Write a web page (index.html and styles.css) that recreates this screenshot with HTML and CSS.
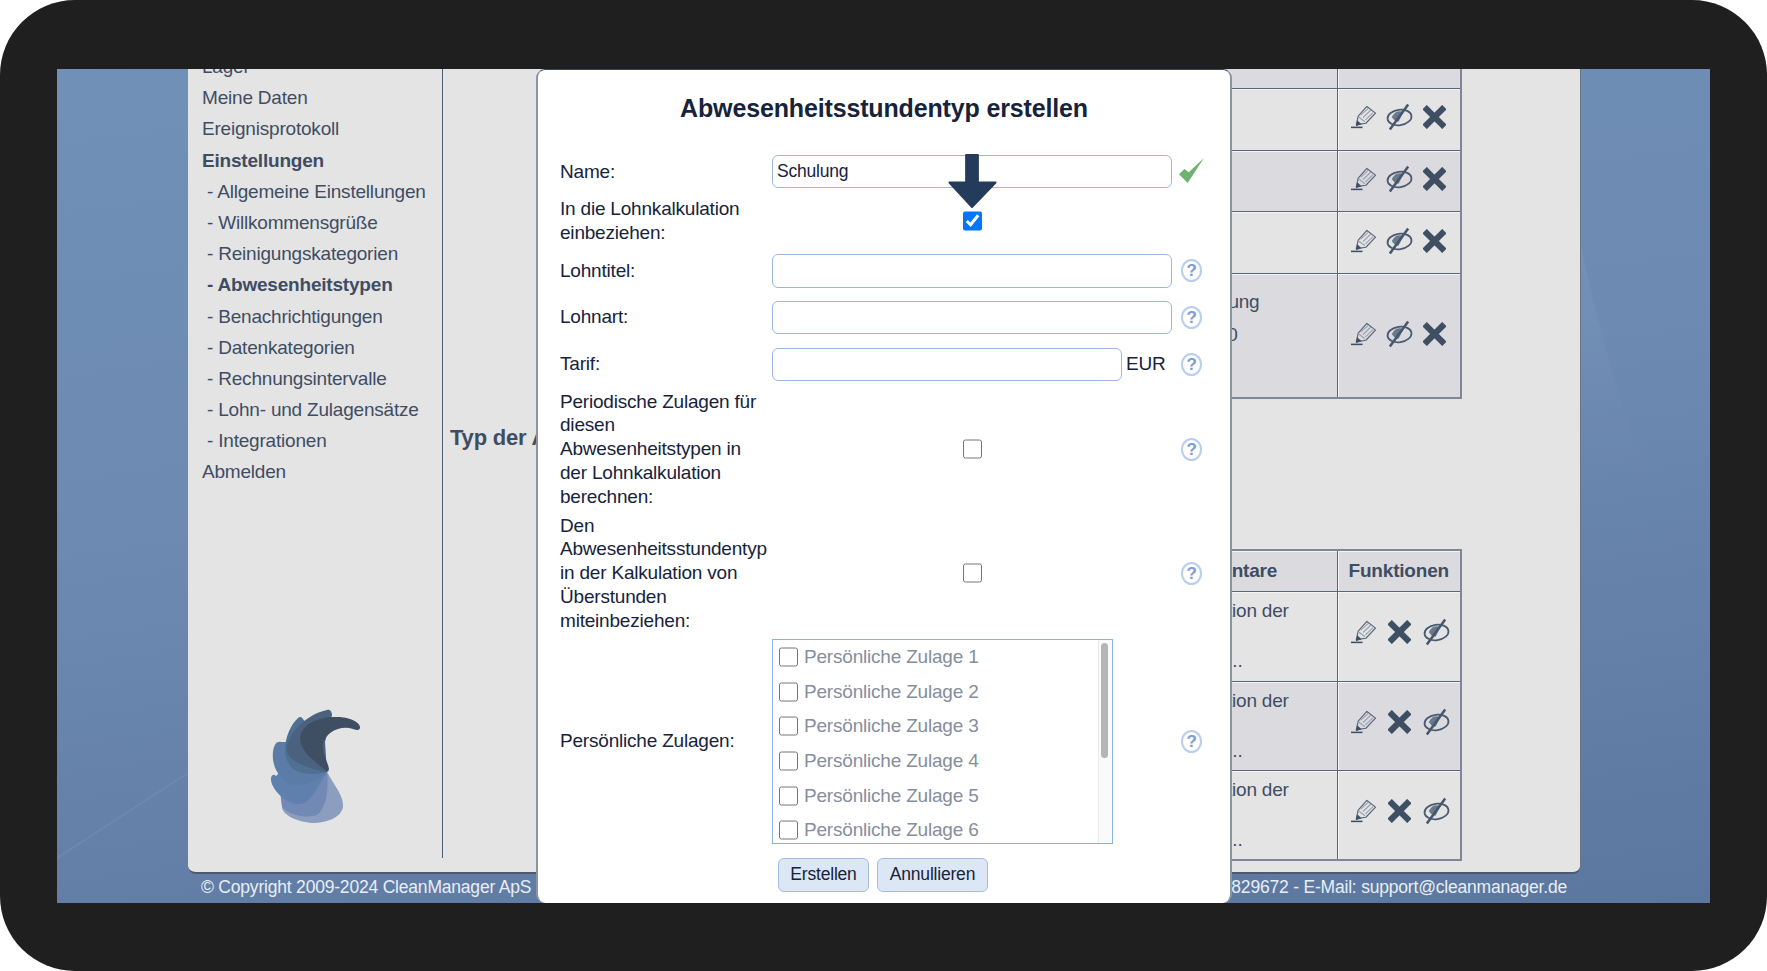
FILE: index.html
```html
<!DOCTYPE html>
<html lang="de">
<head>
    <meta charset="UTF-8">
    <meta name="viewport" content="width=device-width, initial-scale=1.0">
    <title>Abwesenheitstypen</title>
    <link rel="stylesheet" href="styles.css">
</head>
<body>
<svg class="defs" width="0" height="0">
    <symbol id="i-pencil" viewBox="0 0 26 24">
        <path d="M5.5 20 L7.5 11 L16.5 1 L25.5 8 L15.5 18.5 Z" fill="none" stroke="#56657a" stroke-width="1.2" stroke-linejoin="round"/>
        <path d="M10 10 L18 3 M12.5 12.5 L20.5 5 M15 15 L23 7.5 M8 12 L14.5 17" fill="none" stroke="#98a2b0" stroke-width="1.2"/>
        <path d="M5 21.5 L6.5 15.5 L11 19.5 Z" fill="#3f4f63"/>
        <path d="M0 22.8 H12" stroke="#3f4f63" stroke-width="1.6"/>
    </symbol>
    <symbol id="i-eye" viewBox="0 0 28 28">
        <ellipse cx="14" cy="14.5" rx="12.5" ry="8" transform="rotate(-8 14 14.5)" fill="none" stroke="#4a5a6f" stroke-width="1.8"/>
        <path d="M6 14 C9 8 14 7 18 9 L13 19 C10 19 8 17 6 14 Z" fill="#6a788b"/>
        <path d="M4 27 L23 1" stroke="#46566b" stroke-width="2.6"/>
    </symbol>
    <symbol id="i-x" viewBox="0 0 24 24">
        <path d="M4 4 L20 20 M20 4 L4 20" stroke="#3f4f63" stroke-width="6.5" stroke-linecap="square"/>
    </symbol>
</svg>

<div class="frame">
<div class="screen">
    <svg class="wallpaper" viewBox="0 0 1653 834" preserveAspectRatio="none">
        <defs>
            <linearGradient id="swoosh" x1="0" y1="0" x2="0" y2="1">
                <stop offset="0" stop-color="#fff" stop-opacity=".05"/>
                <stop offset="1" stop-color="#fff" stop-opacity="0"/>
            </linearGradient>
        </defs>
        <path d="M0 789 L131 704" stroke="#fff" stroke-opacity=".06" stroke-width="2" fill="none"/>
        <path d="M1523 170 C1540 260 1565 330 1590 420 L1523 420 Z" fill="url(#swoosh)"/>
    </svg>

    <div class="card">
        <aside class="sidebar">
            <ul class="nav">
                <li>Lager</li>
                <li>Meine Daten</li>
                <li>Ereignisprotokoll</li>
                <li class="bold">Einstellungen</li>
                <li class="sub">- Allgemeine Einstellungen</li>
                <li class="sub">- Willkommensgrüße</li>
                <li class="sub">- Reinigungskategorien</li>
                <li class="sub bold">- Abwesenheitstypen</li>
                <li class="sub">- Benachrichtigungen</li>
                <li class="sub">- Datenkategorien</li>
                <li class="sub">- Rechnungsintervalle</li>
                <li class="sub">- Lohn- und Zulagensätze</li>
                <li class="sub">- Integrationen</li>
                <li>Abmelden</li>
            </ul>
            <svg class="logo" viewBox="0 0 180 180">
                <path d="M107 100 C114 113 124 124 123 135 C121 146 106 151 92 151 C78 150 62 143 62 135 C63 133 64 133 65 132 Z" fill="#8b9ec0"/>
                <path d="M107 100 C109 118 106 136 97 143 C84 147 68 142 62 135 L60 120 Z" fill="#7288b5"/>
                <path d="M107 100 C100 110 92 131 80 132 C66 133 50 116 51 106 C52 102 54 102 56 104 L80 80 Z" fill="#5f80ad"/>
                <path d="M107 100 C95 110 85 114 73 113 C62 110 51 96 53 80 C54 72 57 69 61 70 L85 70 Z" fill="#5a7ca6"/>
                <path d="M107 100 C95 103 76 104 69 92 C60 78 68 55 78 46 C80 44 82 45 83 47 L100 70 Z" fill="#4f6f93"/>
                <path d="M107 100 C95 98 72 92 67 80 C64 66 85 42 107 38 C110 37 112 40 112 43 L105 70 Z" fill="#4a6280"/>
                <path d="M108 100 C98 92 80 80 80 66 C81 52 100 44 118 45 C128 45 141 50 140 56 C139 59 136 58 133 57 C120 53 106 60 103 72 C102 82 108 90 109 97 Z" fill="#3e4f64"/>
            </svg>
        </aside>

        <main class="content">
            <table class="grid">
                <tr class="alt"><td class="text"></td><td class="funcs"></td></tr>
                <tr><td class="text"></td><td class="funcs">
                    <div class="icons"><svg class="ic-pen"><use href="#i-pencil"/></svg><svg class="ic-eye"><use href="#i-eye"/></svg><svg class="ic-x"><use href="#i-x"/></svg></div>
                </td></tr>
                <tr class="alt"><td class="text"></td><td class="funcs">
                    <div class="icons"><svg class="ic-pen"><use href="#i-pencil"/></svg><svg class="ic-eye"><use href="#i-eye"/></svg><svg class="ic-x"><use href="#i-x"/></svg></div>
                </td></tr>
                <tr><td class="text"></td><td class="funcs">
                    <div class="icons"><svg class="ic-pen"><use href="#i-pencil"/></svg><svg class="ic-eye"><use href="#i-eye"/></svg><svg class="ic-x"><use href="#i-x"/></svg></div>
                </td></tr>
                <tr class="alt tall"><td class="text">
                    <div class="ln ln-ung">ung</div>
                    <div class="ln ln-zero">0</div>
                </td><td class="funcs">
                    <div class="icons"><svg class="ic-pen"><use href="#i-pencil"/></svg><svg class="ic-eye"><use href="#i-eye"/></svg><svg class="ic-x"><use href="#i-x"/></svg></div>
                </td></tr>
            </table>

            <h2 class="section-title">Typ der Abwesenheit</h2>

            <table class="grid second">
                <tr class="alt head"><th class="text">Kommentare</th><th class="funcs">Funktionen</th></tr>
                <tr class="big"><td class="text">
                    <div class="cmt">Kalkulation der</div>
                    <div class="dots">..</div>
                </td><td class="funcs">
                    <div class="icons"><svg class="ic-pen"><use href="#i-pencil"/></svg><svg class="ic-x"><use href="#i-x"/></svg><svg class="ic-eye"><use href="#i-eye"/></svg></div>
                </td></tr>
                <tr class="alt big"><td class="text">
                    <div class="cmt">Kalkulation der</div>
                    <div class="dots">..</div>
                </td><td class="funcs">
                    <div class="icons"><svg class="ic-pen"><use href="#i-pencil"/></svg><svg class="ic-x"><use href="#i-x"/></svg><svg class="ic-eye"><use href="#i-eye"/></svg></div>
                </td></tr>
                <tr class="big"><td class="text">
                    <div class="cmt">Kalkulation der</div>
                    <div class="dots">..</div>
                </td><td class="funcs">
                    <div class="icons"><svg class="ic-pen"><use href="#i-pencil"/></svg><svg class="ic-x"><use href="#i-x"/></svg><svg class="ic-eye"><use href="#i-eye"/></svg></div>
                </td></tr>
            </table>
        </main>
    </div>

    <footer class="footer">
        <span>© Copyright 2009-2024 CleanManager ApS</span>
        <span>829672 - E-Mail: support@cleanmanager.de</span>
    </footer>

    <!-- dialog -->
    <div class="dialog">
        <h1 class="dialog-title">Abwesenheitsstundentyp erstellen</h1>

        <div class="row">
            <label class="lbl">Name:</label>
            <div class="ctrl"><input class="field" type="text" value="Schulung"></div>
            <svg class="ok" viewBox="0 0 24 24"><path d="M0 16 L5 11 L9 14 L23 1 L8 24 Z" fill="#6fb26f"/></svg>
        </div>
        <div class="row row-check">
            <label class="lbl">In die Lohnkalkulation einbeziehen:</label>
            <div class="ctrl center"><input class="check" type="checkbox" checked></div>
        </div>
        <div class="row row-h34">
            <label class="lbl">Lohntitel:</label>
            <div class="ctrl"><input class="field" type="text"></div>
            <span class="help">?</span>
        </div>
        <div class="row row-wide">
            <label class="lbl">Lohnart:</label>
            <div class="ctrl"><input class="field" type="text"></div>
            <span class="help">?</span>
        </div>
        <div class="row row-wider">
            <label class="lbl">Tarif:</label>
            <div class="ctrl"><input class="field short" type="text"><span class="unit">EUR</span></div>
            <span class="help">?</span>
        </div>
        <div class="row">
            <label class="lbl">Periodische Zulagen für diesen Abwesenheitstypen in der Lohnkalkulation berechnen:</label>
            <div class="ctrl center"><input class="check" type="checkbox"></div>
            <span class="help">?</span>
        </div>
        <div class="row row-tight">
            <label class="lbl">Den Abwesenheitsstundentyp in der Kalkulation von Überstunden miteinbeziehen:</label>
            <div class="ctrl center"><input class="check" type="checkbox"></div>
            <span class="help">?</span>
        </div>
        <div class="row row-list">
            <label class="lbl">Persönliche Zulagen:</label>
            <div class="ctrl">
                <div class="listbox">
                    <label class="item"><input class="check" type="checkbox">Persönliche Zulage 1</label>
                    <label class="item"><input class="check" type="checkbox">Persönliche Zulage 2</label>
                    <label class="item"><input class="check" type="checkbox">Persönliche Zulage 3</label>
                    <label class="item"><input class="check" type="checkbox">Persönliche Zulage 4</label>
                    <label class="item"><input class="check" type="checkbox">Persönliche Zulage 5</label>
                    <label class="item"><input class="check" type="checkbox">Persönliche Zulage 6</label>
                    <div class="scroll-track"><div class="scroll-thumb"></div></div>
                </div>
            </div>
            <span class="help">?</span>
        </div>
        <div class="actions">
            <button class="btn btn-create">Erstellen</button>
            <button class="btn btn-cancel">Annullieren</button>
        </div>
    </div>

    <!-- annotation arrow -->
    <svg class="arrow" viewBox="0 0 51 57">
        <path d="M19 2 H31 V30 H49 L25 55 L2 30 H19 Z" fill="#253b5c" stroke="#253b5c" stroke-width="2" stroke-linejoin="round"/>
    </svg>
</div>
</div>
</body>
</html>
```

FILE: styles.css
```css
* {
    box-sizing: border-box;
}

body {
    margin: 0;
    background: #fff;
    font-family: "Liberation Sans", Arial, sans-serif;
    font-size: 19px;
    letter-spacing: -0.2px;
    overflow: hidden;
}

.defs {
    position: absolute;
}

.frame {
    width: 1767px;
    height: 971px;
    padding: 69px 57px 68px;
    background: #201f20;
    border-radius: 75px;
}

.screen {
    position: relative;
    width: 1653px;
    height: 834px;
    overflow: hidden;
    background: linear-gradient(172deg, #7090b8 0%, #6c8ab2 45%, #5c779f 100%);
}

.wallpaper {
    position: absolute;
    left: 0;
    top: 0;
    width: 100%;
    height: 100%;
}

/* main card */
.card {
    position: relative;
    display: flex;
    width: 1393px;
    height: 805px;
    margin-left: 131px;
    background: #e4e4e4;
    border-right: 1px solid #66758a;
    border-bottom: 2px solid #4c5a70;
    border-radius: 0 0 8px 8px;
    color: #3f4d63;
}

.sidebar {
    width: 255px;
    height: 789px;
    border-right: 1px solid #4f5f75;
    flex-shrink: 0;
    display: flex;
    flex-direction: column;
}

.nav {
    list-style: none;
    margin: -18px 0 0;
    padding: 0 0 0 14px;
}

.nav li {
    height: 31.2px;
    line-height: 31.2px;
    white-space: nowrap;
}

.nav .sub {
    padding-left: 5px;
}

.bold {
    font-weight: bold;
}

.logo {
    width: 180px;
    height: 180px;
    margin: 184px 0 0 32px;
}

.content {
    flex: 1;
    margin-top: -43px;
    padding-left: 7px;
    min-width: 0;
}

.grid {
    width: 302px;
    margin-left: auto;
    margin-right: 118px;
    border-collapse: collapse;
    table-layout: fixed;
    border: 2px solid #7c8798;
}

.grid td,
.grid th {
    height: 61.6px;
    border: 1px solid #56667c;
    box-shadow: inset 1px 1px 0 #f4f4f6;
    padding: 0;
    background: #e4e4e4;
}

.grid .alt td,
.grid .alt th {
    background: #dbdbdf;
}

.grid .text {
    vertical-align: top;
    text-align: left;
    white-space: nowrap;
    overflow: hidden;
}

.grid th.text {
    padding-left: 1px;
    vertical-align: middle;
}

.grid .funcs {
    width: 124px;
}

.grid .tall td {
    height: 125px;
}

.grid .big td {
    height: 89.7px;
}

.grid .head th {
    height: 41px;
}

.ln {
    text-align: right;
    line-height: 33px;
}

.ln-ung {
    margin-top: 11px;
    padding-right: 77px;
}

.ln-zero {
    padding-right: 99px;
}

.cmt {
    margin-top: 6px;
    padding-left: 4px;
    line-height: 25px;
}

.dots {
    margin-top: 25px;
    padding-right: 94px;
    line-height: 25px;
    text-align: right;
}

.icons {
    display: flex;
    align-items: center;
    gap: 10px;
    margin-left: 13px;
    padding-bottom: 4px;
}

.second .icons {
    gap: 12px;
    padding-bottom: 8px;
}

.ic-pen {
    width: 25px;
    height: 24px;
}

.ic-eye {
    width: 27px;
    height: 28px;
}

.ic-x {
    width: 23px;
    height: 24px;
}

.section-title {
    margin: 26px 0 98px;
    font-size: 22px;
    line-height: 26px;
    white-space: nowrap;
}

.footer {
    display: flex;
    justify-content: space-between;
    position: relative;
    width: 1393px;
    margin-left: 131px;
    padding: 0 14px 0 13px;
    font-size: 17.5px;
    line-height: 26px;
    color: #e8eef6;
}

/* dialog */
.dialog {
    position: absolute;
    left: 479px;
    top: 0;
    width: 696px;
    height: 834px;
    padding: 0 0 0 22px;
    background: #fff;
    border: 2px solid #8d93a0;
    border-top: 1px solid #33465f;
    border-bottom: 0;
    border-radius: 9px;
    color: #16233b;
}

.dialog-title {
    margin: 23px 22px 32px 0;
    font-size: 25px;
    letter-spacing: -0.15px;
    line-height: 30px;
    text-align: center;
}

.row {
    display: flex;
    align-items: center;
    margin-top: 9px;
    line-height: 23.8px;
}

.dialog-title + .row {
    margin-top: 0;
}

.row-h34 .field {
    height: 34px;
}

.row-wide {
    margin-top: 13px;
}

.row-wider {
    margin-top: 14px;
}

.row-tight {
    margin-top: 5px;
}

.row-list {
    margin-top: 6px;
}

.lbl {
    width: 212px;
    padding-right: 4px;
    flex-shrink: 0;
}

.ctrl {
    display: flex;
    align-items: center;
    width: 400px;
}

.center {
    justify-content: center;
}

.field {
    display: block;
    width: 100%;
    height: 33px;
    padding: 0 4px;
    border: 1px solid #9db7e0;
    border-radius: 6px;
    background: #fff;
    color: #16233b;
    font: 17.5px "Liberation Sans", Arial, sans-serif;
    letter-spacing: -0.2px;
}

.field.short {
    width: 350px;
}

.unit {
    margin-left: 4px;
}

.check {
    width: 19px;
    height: 20px;
    margin: 0;
    flex-shrink: 0;
}

.help {
    display: inline-block;
    width: 21px;
    height: 23px;
    margin-left: 9px;
    border: 2px solid #b9cdee;
    border-radius: 50%;
    color: #7d9cd1;
    font-size: 17px;
    font-weight: bold;
    line-height: 19px;
    text-align: center;
}

.ok {
    width: 26px;
    height: 26px;
    margin: -4px 0 0 7px;
}

.listbox {
    position: relative;
    width: 341px;
    height: 205px;
    border: 1px solid #8fb0e6;
    overflow: hidden;
    color: #858e9c;
}

.scroll-track {
    position: absolute;
    right: 0;
    top: 0;
    bottom: 0;
    width: 14px;
    background: #fafafa;
    border-left: 1px solid #e8e8e8;
}

.scroll-thumb {
    width: 7px;
    height: 115px;
    margin: 3px 0 0 2px;
    background: #b5b5b5;
    border-radius: 4px;
}

.item {
    display: flex;
    align-items: center;
    gap: 6px;
    height: 34.7px;
    padding-left: 6px;
}

.actions {
    display: flex;
    gap: 8px;
    margin: 14px 0 0 218px;
}

.btn {
    height: 34px;
    padding: 0;
    background: #dbe7f5;
    border: 1px solid #a3bde0;
    border-radius: 6px;
    color: #16233b;
    font: 17.5px "Liberation Sans", Arial, sans-serif;
    letter-spacing: -0.2px;
}

.btn-create {
    width: 91px;
}

.btn-cancel {
    width: 111px;
}

.arrow {
    position: absolute;
    left: 890px;
    top: 84px;
    width: 51px;
    height: 56px;
}
```
